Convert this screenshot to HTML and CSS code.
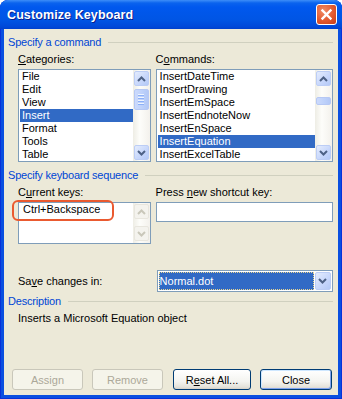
FILE: index.html
```html
<!DOCTYPE html>
<html lang="en">
<head>
<meta charset="UTF-8" />
<meta name="viewport" content="width=device-width, initial-scale=1" />
<title>Customize Keyboard</title>
<link rel="stylesheet" href="styles.css">
</head>
<body>
<div class="window">
  <div class="titlebar">
    <span class="title">Customize Keyboard</span>
    <span class="close-x">
      <svg width="13" height="13" viewBox="0 0 13 13"><path d="M2.5 2.5 L10.5 10.5 M10.5 2.5 L2.5 10.5" stroke="#fff" stroke-width="2.4" stroke-linecap="square" fill="none"/></svg>
    </span>
  </div>

  <div class="client">
    <div class="group-head">Specify a command</div>
    <div class="cols">
      <div class="col left">
        <div class="label"><u>C</u>ategories:</div>
        <div class="listbox">
          <ul class="items">
            <li>File</li>
            <li>Edit</li>
            <li>View</li>
            <li class="sel">Insert</li>
            <li>Format</li>
            <li>Tools</li>
            <li>Table</li>
          </ul>
          <div class="vscroll">
            <span class="sb-btn"><svg width="9" height="6" viewBox="0 0 9 6"><path d="M1 5 L4.5 1.5 L8 5" /></svg></span>
            <span class="sb-thumb cat-thumb"><i></i><i></i><i></i><i></i></span>
            <span class="sb-fill"></span>
            <span class="sb-btn"><svg width="9" height="6" viewBox="0 0 9 6"><path d="M1 1 L4.5 4.5 L8 1" /></svg></span>
          </div>
        </div>
      </div>
      <div class="col right">
        <div class="label">C<u>o</u>mmands:</div>
        <div class="listbox">
          <ul class="items">
            <li>InsertDateTime</li>
            <li>InsertDrawing</li>
            <li>InsertEmSpace</li>
            <li>InsertEndnoteNow</li>
            <li>InsertEnSpace</li>
            <li class="sel">InsertEquation</li>
            <li>InsertExcelTable</li>
          </ul>
          <div class="vscroll">
            <span class="sb-btn"><svg width="9" height="6" viewBox="0 0 9 6"><path d="M1 5 L4.5 1.5 L8 5" /></svg></span>
            <span class="sb-thumb cmd-thumb"></span>
            <span class="sb-fill"></span>
            <span class="sb-btn"><svg width="9" height="6" viewBox="0 0 9 6"><path d="M1 1 L4.5 4.5 L8 1" /></svg></span>
          </div>
        </div>
      </div>
    </div>

    <div class="group-head">Specify keyboard sequence</div>
    <div class="cols">
      <div class="col left">
        <div class="label">C<u>u</u>rrent keys:</div>
        <div class="listbox keys">
          <ul class="items">
            <li>Ctrl+Backspace</li>
          </ul>
          <div class="vscroll off">
            <span class="sb-btn"><svg width="9" height="6" viewBox="0 0 9 6"><path d="M1 5 L4.5 1.5 L8 5" /></svg></span>
            <span class="sb-fill"></span>
            <span class="sb-btn"><svg width="9" height="6" viewBox="0 0 9 6"><path d="M1 1 L4.5 4.5 L8 1" /></svg></span>
          </div>
          <span class="callout"></span>
        </div>
      </div>
      <div class="col right">
        <div class="label">Press <u>n</u>ew shortcut key:</div>
        <div class="textbox"></div>
      </div>
    </div>

    <div class="cols save-row">
      <div class="col left">
        <div class="label">Sa<u>v</u>e changes in:</div>
      </div>
      <div class="col right">
        <div class="combo">
          <span class="combo-val">Normal.dot</span>
          <span class="sb-btn combo-btn"><svg width="9" height="6" viewBox="0 0 9 6"><path d="M1 1 L4.5 4.5 L8 1" /></svg></span>
        </div>
      </div>
    </div>

    <div class="group-head desc-head">Description</div>
    <div class="desc">Inserts a Microsoft Equation object</div>

    <div class="buttons">
      <button class="btn" disabled>Assign</button>
      <button class="btn" disabled>Remove</button>
      <button class="btn wide">R<u>e</u>set All...</button>
      <button class="btn default">Close</button>
    </div>
  </div>
</div>
</body>
</html>
```

FILE: styles.css
```css
body {
  margin: 0;
  background: #fff;
  font-family: "Liberation Sans", Arial, sans-serif;
  font-size: 11px;
  color: #000;
}
.window {
  width: 342px;
  height: 399px;
  box-sizing: border-box;
  display: flex;
  flex-direction: column;
  background: #0A4FE0;
  border-radius: 8px 8px 0 0;
  box-shadow: inset 0 0 0 1px #0831D9;
  overflow: hidden;
}
.titlebar {
  height: 29px;
  flex: none;
  display: flex;
  align-items: center;
  justify-content: space-between;
  padding: 0 5px 0 7px;
  background: linear-gradient(#3D8EF8 0, #0A63EE 3px, #0058EE 7px, #0055E4 20px, #0048D8 27px, #0040CC 29px);
}
.title {
  color: #fff;
  font-weight: bold;
  font-size: 12.5px;
  text-shadow: 1px 1px #0A1E8C;
  letter-spacing: 0.1px;
}
.close-x {
  width: 21px;
  height: 21px;
  box-sizing: border-box;
  border: 1px solid #fff;
  border-radius: 3px;
  background: radial-gradient(circle at 35% 30%, #F08C66 0, #E2592F 55%, #C63C16 100%);
  display: flex;
  align-items: center;
  justify-content: center;
}
.client {
  flex: 1;
  margin: 0 4px 4px;
  background: #ECE9D8;
  display: flex;
  flex-direction: column;
  padding: 0 5px 5px 4px;
}
.group-head {
  display: flex;
  align-items: center;
  gap: 7px;
  color: #0046D5;
  line-height: 13px;
  margin-top: 7px;
  white-space: nowrap;
  letter-spacing: -0.2px;
}
.group-head::after {
  content: "";
  flex: 1;
  height: 1px;
  background: #D0D0BF;
}
.cols {
  display: flex;
  gap: 5px;
  margin-left: 10px;
}
.col.left { width: 133px; }
.col.right { width: 178px; }
.label {
  line-height: 13px;
  margin: 4px 0 3px;
  white-space: nowrap;
}
.listbox {
  position: relative;
  display: flex;
  height: 93px;
  box-sizing: border-box;
  border: 1px solid #7F9DB9;
  background: #fff;
}
.items {
  flex: 1;
  list-style: none;
  margin: 0;
  padding: 0 0 0 1px;
  overflow: hidden;
}
.items li {
  height: 13px;
  line-height: 13px;
  padding-left: 2px;
  white-space: nowrap;
}
.items li.sel {
  background: #316AC5;
  color: #fff;
}
.vscroll {
  width: 17px;
  flex: none;
  display: flex;
  flex-direction: column;
  background: linear-gradient(90deg, #EEEDE5, #FDFDFA 40%, #F3F1EC);
}
.sb-btn {
  height: 15px;
  margin: 1px;
  box-sizing: border-box;
  border: 1px solid #BCCDF5;
  border-radius: 2px;
  background: linear-gradient(135deg, #E4ECFD, #C6D6FB 60%, #B4C9F6);
  display: flex;
  align-items: center;
  justify-content: center;
}
.sb-btn svg path {
  fill: none;
  stroke: #4D6185;
  stroke-width: 2;
}
.sb-thumb {
  margin: 2px 1px 0;
  box-sizing: border-box;
  border: 1px solid #B6C8F4;
  border-radius: 2px;
  background: linear-gradient(90deg, #CCDAFC, #BCD0FA 60%, #B3C8F6);
  display: flex;
  flex-direction: column;
  align-items: center;
  justify-content: center;
  gap: 1px;
}
.cat-thumb { height: 21px; }
.cmd-thumb { height: 8px; margin-top: 10px; }
.sb-thumb i {
  width: 6px;
  height: 1px;
  background: #EEF4FE;
  border-bottom: 1px solid #8CB0F8;
}
.sb-fill { flex: 1; }
.vscroll.off .sb-btn {
  border-color: #E8E6DE;
  background: #F4F3EE;
}
.vscroll.off .sb-btn svg path { stroke: #C9C7BA; }
.vscroll.off .sb-btn:last-child { margin-bottom: 2px; }
.listbox.keys { height: 42px; }
.listbox.keys .items li { padding-left: 3px; }
.callout {
  position: absolute;
  left: -7px;
  top: -3px;
  width: 102px;
  height: 21px;
  box-sizing: border-box;
  border: 2px solid #EA5A30;
  border-radius: 6px;
}
.textbox {
  height: 20px;
  box-sizing: border-box;
  border: 1px solid #7F9DB9;
  background: #fff;
}
.save-row {
  margin-top: 26px;
  align-items: center;
}
.save-row .label { margin: 0; }
.combo {
  margin-left: 1px;
  width: 176px;
  height: 22px;
  box-sizing: border-box;
  border: 1px solid #7F9DB9;
  background: #fff;
  padding: 1px;
  display: flex;
  gap: 1px;
}
.combo-val {
  flex: 1;
  background: #316AC5;
  color: #fff;
  border: 1px dotted #E9D58E;
  line-height: 16px;
  padding-left: 0;
}
.combo-btn {
  width: 16px;
  height: 18px;
  margin: 0;
}
.desc-head { margin-top: 3px; }
.desc {
  margin: 4px 0 0 10px;
  line-height: 13px;
}
.buttons {
  margin-top: auto;
  display: flex;
  padding-left: 4px;
}
.btn {
  width: 71px;
  height: 21px;
  margin-right: 9px;
  box-sizing: border-box;
  border: 1px solid #003C74;
  border-radius: 3px;
  background: linear-gradient(#FFFFFF, #F4F4F0 60%, #E4E2DA 90%, #D6D0C5);
  font-family: inherit;
  font-size: 11px;
  color: #000;
  padding: 0;
}
.btn.wide { width: 78px; margin-left: 1px; }
.btn.default {
  width: 72px;
  margin-right: 0;
  box-shadow: inset 1px 1px 0 #CEE7FF, inset -1px -1px 0 #7FA2EC;
}
.btn:disabled {
  border-color: #C9C7BA;
  background: #F5F4EA;
  color: #ACA899;
}
```
